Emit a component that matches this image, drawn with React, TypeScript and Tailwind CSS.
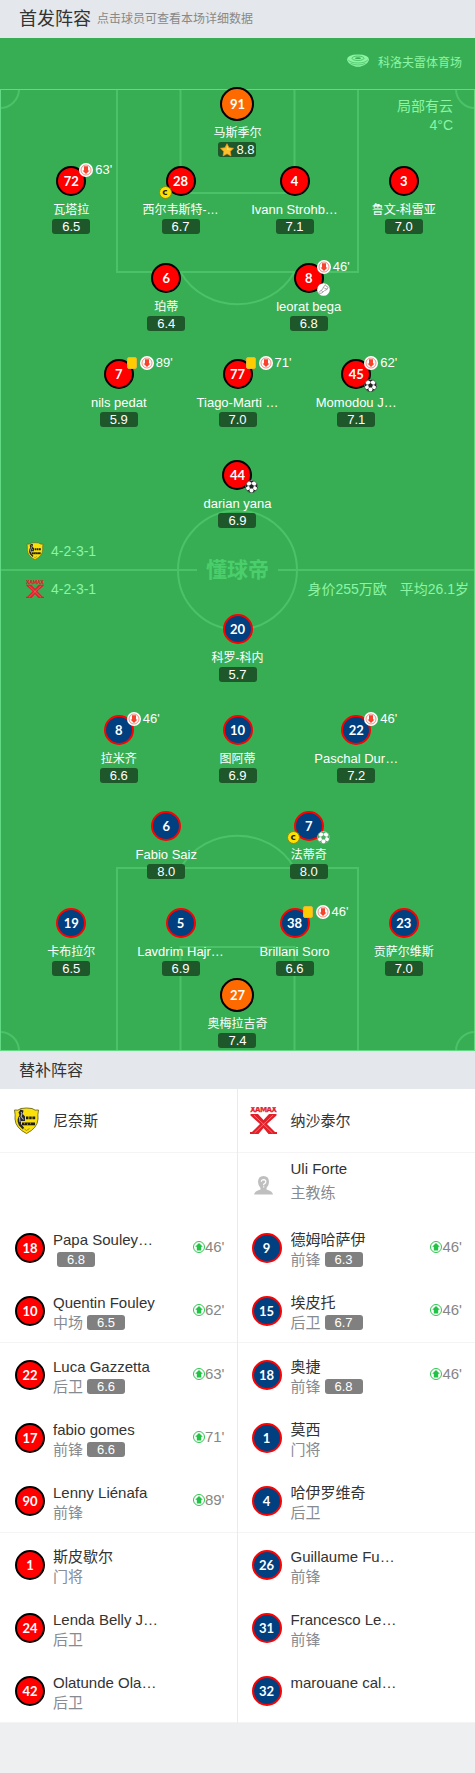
import React from "react";

type Sub = { card?: boolean; off?: string; captain?: boolean; mark?: "goal" | "boot" | "assist" };
type Starter = Sub & { no: number; name: string; rating: string; star?: boolean; keeper?: boolean };
type Reserve = { no: number; name: string; role?: string; rating?: string; on?: string };
type Side = "home" | "away";

const homeRows: Starter[][] = [
  [{ no: 91, name: "马斯季尔", rating: "8.8", star: true, keeper: true }],
  [
    { no: 72, name: "瓦塔拉", rating: "6.5", off: "63'" },
    { no: 28, name: "西尔韦斯特-…", rating: "6.7", captain: true },
    { no: 4, name: "Ivann Strohb…", rating: "7.1" },
    { no: 3, name: "鲁文-科雷亚", rating: "7.0" },
  ],
  [
    { no: 6, name: "珀蒂", rating: "6.4" },
    { no: 8, name: "leorat bega", rating: "6.8", off: "46'", mark: "boot" },
  ],
  [
    { no: 7, name: "nils pedat", rating: "5.9", card: true, off: "89'" },
    { no: 77, name: "Tiago-Marti …", rating: "7.0", card: true, off: "71'" },
    { no: 45, name: "Momodou J…", rating: "7.1", off: "62'", mark: "goal" },
  ],
  [{ no: 44, name: "darian yana", rating: "6.9", mark: "goal" }],
];

const awayRows: Starter[][] = [
  [{ no: 20, name: "科罗-科内", rating: "5.7" }],
  [
    { no: 8, name: "拉米齐", rating: "6.6", off: "46'" },
    { no: 10, name: "图阿蒂", rating: "6.9" },
    { no: 22, name: "Paschal Dur…", rating: "7.2", off: "46'" },
  ],
  [
    { no: 6, name: "Fabio Saiz", rating: "8.0" },
    { no: 7, name: "法蒂奇", rating: "8.0", captain: true, mark: "assist" },
  ],
  [
    { no: 19, name: "卡布拉尔", rating: "6.5" },
    { no: 5, name: "Lavdrim Hajr…", rating: "6.9" },
    { no: 38, name: "Brillani Soro", rating: "6.6", card: true, off: "46'" },
    { no: 23, name: "贡萨尔维斯", rating: "7.0" },
  ],
  [{ no: 27, name: "奥梅拉吉奇", rating: "7.4", keeper: true }],
];

const homeBench: Reserve[] = [
  { no: 18, name: "Papa Souley…", rating: "6.8", on: "46'" },
  { no: 10, name: "Quentin Fouley", role: "中场", rating: "6.5", on: "62'" },
  { no: 22, name: "Luca Gazzetta", role: "后卫", rating: "6.6", on: "63'" },
  { no: 17, name: "fabio gomes", role: "前锋", rating: "6.6", on: "71'" },
  { no: 90, name: "Lenny Liénafa", role: "前锋", on: "89'" },
  { no: 1, name: "斯皮歇尔", role: "门将" },
  { no: 24, name: "Lenda Belly J…", role: "后卫" },
  { no: 42, name: "Olatunde Ola…", role: "后卫" },
];

const awayBench: Reserve[] = [
  { no: 9, name: "德姆哈萨伊", role: "前锋", rating: "6.3", on: "46'" },
  { no: 15, name: "埃皮托", role: "后卫", rating: "6.7", on: "46'" },
  { no: 18, name: "奥捷", role: "前锋", rating: "6.8", on: "46'" },
  { no: 1, name: "莫西", role: "门将" },
  { no: 4, name: "哈伊罗维奇", role: "后卫" },
  { no: 26, name: "Guillaume Fu…", role: "前锋" },
  { no: 31, name: "Francesco Le…", role: "前锋" },
  { no: 32, name: "marouane cal…" },
];

function HomeCrest({ className }: { className: string }) {
  return (
    <svg viewBox="0 0 27 27" className={className} aria-hidden="true">
      <path d="M1.500 3 Q5 4 8 1.500 Q13.500 .5 19 1.500 Q22 4 25.500 3 Q24.500 8 25 12 Q24.500 21 13.500 26.500 Q2.500 21 2 12 Q2.500 8 1.500 3Z" fill="#fbe10a" stroke="#6b6420" strokeWidth=".9" />
      <path d="M7.500 2.500 L10.500 3.500 L9.800 7 L12 9.500 V14 H8 V17 L11 20.500 L10 22.500 L6 18.500 Q3.800 14 5 11 L6.500 8 L5.500 5.500Z" fill="#26272a" />
      <path d="M8 5 L9 6.500 L8 9.500 L10.500 12.500 M6.500 10 L7 15" stroke="#b4b6c0" strokeWidth="1.100" fill="none" />
      <path d="M13 9.500 h2.500 v2.800 H13z M16.200 9.500 h2.500 v2.800 h-2.500z M19.400 9.500 h2.800 v2.800 h-2.800z" fill="#1c1b12" />
      <path d="M9 15.500 h13 v2.800 H9z" fill="#1c1b12" />
      <path d="M11.500 15.500 v1.800 M14.500 16.300 v2 M17.500 15.500 v1.800" stroke="#d8c413" strokeWidth=".6" />
      <path d="M11.500 22 L13.500 23.500 L16.500 21.500" stroke="#8c7f16" strokeWidth=".8" fill="none" />
    </svg>
  );
}

function AwayCrest({ className }: { className: string }) {
  return (
    <svg viewBox="0 0 27 27" className={className} fill="none" aria-hidden="true">
      <text x="13.500" y="5.300" textAnchor="middle" fontSize="7" fontWeight="900" fill="#e2202a" stroke="#e2202a" strokeWidth=".4" fontFamily="Lato, sans-serif">
        XAMAX
      </text>
      <path d="M.5 7 H8 L13.500 13 L19 7 H26.500 V8.500 L17 17 L25 25 H27 V27 H18.500 L13.500 21 L8.500 27 H0 V25 H2 L10 17 L.5 8.500Z" fill="#e2202a" />
      <path d="M4 8.200 L22.500 26 M23 8.200 L4.500 26" stroke="#f7c3c4" strokeWidth=".5" />
    </svg>
  );
}

function Arrow({ up }: { up?: boolean }) {
  return up ? (
    <svg viewBox="0 0 12 12" className="size-3 shrink-0" aria-hidden="true">
      <circle cx="6" cy="6" r="5.500" fill="#fff" stroke="#2fc552" />
      <path d="M6 1.900 L9.800 5.700 H8.200 V9.600 H3.800 V5.700 H2.200Z" fill="#22c245" />
    </svg>
  ) : (
    <svg viewBox="0 0 14 14" className="size-3.5 shrink-0" aria-hidden="true">
      <circle cx="7" cy="7" r="7" fill="#fff" />
      <circle cx="7" cy="7" r="5" fill="none" stroke="#f4705f" strokeWidth=".8" />
      <path d="M7 11 L3.500 7.400 H5 V3.200 H9 V7.400 H10.500Z" fill="#f5432c" />
    </svg>
  );
}

function Ball({ dark }: { dark: string }) {
  return (
    <svg viewBox="0 0 14 14" className="size-[13px]" aria-hidden="true">
      <circle cx="7" cy="7" r="6.600" fill="#fff" stroke={dark} strokeWidth=".6" />
      <path d="M7 4.300 L9.600 6.200 L8.600 9.200 H5.400 L4.400 6.200Z" fill={dark} />
      <path d="M4 1 H10 L7 3Z M12.300 3.500 L13.600 8.500 L11 6.600Z M12 11.300 L8.300 13.500 L9.500 10.400Z M2 11.300 L5.700 13.500 L4.500 10.400Z M1.700 3.500 L.4 8.500 L3 6.600Z" fill={dark} />
      <path d="M7 2.500 V5 M9 6.500 L11.500 6 M8.300 9 L9.800 11 M5.700 9 L4.200 11 M5 6.500 L2.500 6" stroke={dark} strokeWidth=".5" />
    </svg>
  );
}

function Boot() {
  return (
    <svg viewBox="0 0 14 14" className="size-[13px]" aria-hidden="true">
      <circle cx="7" cy="7" r="6.800" fill="#fff" />
      <path d="M9 1.800 Q9.300 3.800 12 4.500 Q11.500 7.500 8 8.300 Q5.500 11.500 2.800 11.300 Q1.300 10.500 3 9 Q6.500 7.500 7 4.500Z M7 4.500 Q8 6.500 11 6.500 M4.500 8 L6.300 9.500" fill="none" stroke="#8b8b8b" strokeWidth=".8" />
    </svg>
  );
}

function Captain() {
  return (
    <span className="flex size-[13px] items-center justify-center rounded-full border border-[#8a8a10] bg-[#ffe100] pb-px font-['DejaVu_Sans',sans-serif] text-[9px] leading-[9px] font-bold text-[#222]">
      c
    </span>
  );
}

function Star() {
  return (
    <svg viewBox="0 0 14 14" className="size-3.5" aria-hidden="true">
      <path d="M7 .7 L9 4.700 L13.500 5.300 L10.200 8.400 L11 12.900 L7 10.800 L3 12.900 L3.800 8.400 L.5 5.300 L5 4.700Z" fill="#ffc02e" stroke="#f59a1c" strokeWidth=".7" strokeLinejoin="round" />
      <path d="M7 2.500 L8.200 5.500 L11.500 6 L7 7Z" fill="#ffe07a" />
    </svg>
  );
}

function StadiumIcon() {
  return (
    <svg viewBox="0 0 22 13" className="h-[13px] w-[22px]" fill="none" aria-hidden="true">
      <path d="M0 6 Q0 .5 11 .5 Q22 .5 22 6 Q21 9 17.500 11 L13 12.700 H9 L4.500 11 Q1 9 0 6Z" fill="#8bf5a4" />
      <ellipse cx="11" cy="4.300" rx="6" ry="2.200" stroke="#37ae54" strokeWidth=".7" />
      <ellipse cx="11" cy="4.200" rx="3" ry=".9" fill="#37ae54" />
      <path d="M1.200 6 Q4 9 11 9 Q18 9 20.800 6 M3.500 9.300 Q7 11 11 11 Q15 11 18.500 9.300" stroke="#37ae54" strokeWidth=".6" />
    </svg>
  );
}

function CoachIcon() {
  return (
    <svg viewBox="0 0 19 19" className="size-[19px]" aria-hidden="true">
      <path d="M9.500 0 Q15 0 15 6 Q15 9.500 12.500 12 V13.500 Q18.500 15 19 18.500 H0 Q.5 15 6.500 13.500 V12 Q4 9.500 4 6 Q4 0 9.500 0Z" fill="#bfbfbf" />
      <path d="M7.300 5.700 Q7.500 3.700 9.700 3.700 Q12 4 11.800 6 Q11.500 7.300 9.700 8.200 V9.300 M9.700 10.200 V11.500" fill="none" stroke="#fff" strokeWidth="1.200" />
    </svg>
  );
}

const shirt: Record<Side, string> = {
  home: "border-black bg-[#ff0000]",
  away: "border-[#ff0000] bg-[#004080]",
};

function Shirt({ side, no }: { side: Side; no: number }) {
  return (
    <span className={`flex size-[30px] shrink-0 items-center justify-center rounded-full border-2 font-['Lato',sans-serif] text-[13px] leading-4 font-bold text-white ${shirt[side]}`}>
      {no}
    </span>
  );
}

function Player({ p, side }: { p: Starter; side: Side }) {
  const latin = /^[A-Za-z]/.test(p.name);
  return (
    <li className="flex min-w-0 justify-center">
      <a href={`#${side}-${p.no}`} className="flex flex-col items-center text-white">
        <span className="relative">
          {p.keeper ? (
            <span className="flex size-[34px] items-center justify-center rounded-full border-2 border-black bg-[#ff6a00] font-['Lato',sans-serif] text-[13px] leading-4 font-bold">
              {p.no}
            </span>
          ) : (
            <span className="block pb-0.5">
              <Shirt side={side} no={p.no} />
            </span>
          )}
          {p.off && (
            <span className="absolute -top-[3px] left-[23px] flex items-center gap-0.5">
              {p.card && <span className="mr-px h-3 w-2.5 shrink-0 rounded-xs border border-[#e0b83a] bg-[#ffcc00]" />}
              <Arrow />
              <span className="text-[13px] leading-[14px]">{p.off}</span>
            </span>
          )}
          {p.captain && (
            <span className="absolute top-5 -left-[7px]">
              <Captain />
            </span>
          )}
          {p.mark && (
            <span className="absolute top-5 left-[23px]">
              {p.mark === "boot" ? <Boot /> : <Ball dark={p.mark === "goal" ? "#222" : "#4fae66"} />}
            </span>
          )}
        </span>
        <span className={`h-[21px] pt-[3px] leading-[18px] whitespace-nowrap ${latin ? "text-[13px]" : "text-xs leading-[18px]"}`}>{p.name}</span>
        <span className="flex h-[15px] w-[38px] items-center justify-center gap-0.5 rounded-[3px] bg-[#1d572a] text-[13px] leading-[15px]">
          {p.star && <Star />}
          {p.rating}
        </span>
      </a>
    </li>
  );
}

const columns: Record<number, string> = {
  1: "grid-cols-[100%]",
  2: "grid-cols-[30%_30%]",
  3: "grid-cols-[25%_25%_25%]",
  4: "grid-cols-[22%_24%_24%_22%]",
};

function Line({ players, side, space }: { players: Starter[]; side: Side; space: string }) {
  return (
    <ul className={`grid justify-center ${columns[players.length]} ${space}`}>
      {players.map((p) => (
        <Player key={p.no} p={p} side={side} />
      ))}
    </ul>
  );
}

function PitchLines() {
  return (
    <svg viewBox="0 0 475 962" preserveAspectRatio="none" className="absolute inset-0 size-full" fill="none" aria-hidden="true">
      <g stroke="#4bc267" strokeWidth="2">
        <path d="M117 0 V183 H358 V0 M180.500 0 V104 H294.500 V0 M180.500 183 C205 226 270 226 294.500 183" />
        <path d="M117 962 V779 H358 V962 M180.500 962 V858 H294.500 V962 M180.500 779 C205 736 270 736 294.500 779" />
        <path d="M0 481 H197 M278 481 H475" />
        <circle cx="237.500" cy="481" r="59.500" />
        <path d="M0 19 A19 19 0 0 0 19 0 M456 0 A19 19 0 0 0 475 19 M0 943 A19 19 0 0 1 19 962 M456 962 A19 19 0 0 1 475 943" />
      </g>
      <rect x=".5" y=".5" width="474" height="961" stroke="#62d983" />
    </svg>
  );
}

function Pitch() {
  const homeSpace = ["", "mt-[9px]", "mt-[29px]", "mt-7", "mt-[33px]"];
  const awaySpace = ["", "mt-[33px]", "mt-7", "mt-[29px]", "mt-0.5"];
  return (
    <section className="relative bg-[#37ae54] pb-[3px]">
      <div className="absolute inset-x-0 top-[51px] bottom-0">
        <PitchLines />
        <div className="absolute top-2 right-[22px] text-right text-sm leading-[19px] text-[#8bf5a4]">
          <p>局部有云</p>
          <p>4°C</p>
        </div>
      </div>
      <div className="relative">
        <div className="flex h-[49px] items-center justify-end gap-[9px] pr-[13px] text-xs text-[#8bf5a4]">
          <span className="pb-1">
            <StadiumIcon />
          </span>
          <span>科洛夫雷体育场</span>
        </div>
        {homeRows.map((r, i) => (
          <Line key={i} players={r} side="home" space={homeSpace[i]} />
        ))}
        <div className="relative pt-1 pr-1.5 pb-1.5 pl-[26px] text-sm text-[#8bf5a4]">
          <div className="flex h-[38px] items-center gap-[7px]">
            <HomeCrest className="size-[18px]" />
            4-2-3-1
          </div>
          <div className="flex h-[38px] items-center gap-[7px]">
            <AwayCrest className="size-[18px]" />
            4-2-3-1
            <span className="ml-auto">身价255万欧</span>
            <span className="ml-1.5">平均26.1岁</span>
          </div>
          <div className="absolute inset-0 flex items-center justify-center pb-1 text-[21px] leading-none font-bold text-[#4bcf6c]">
            懂球帝
          </div>
        </div>
        {awayRows.map((r, i) => (
          <Line key={i} players={r} side="away" space={awaySpace[i]} />
        ))}
      </div>
    </section>
  );
}

function Team({ side, name, coach, players }: { side: Side; name: string; coach?: string; players: Reserve[] }) {
  const home = side === "home";
  return (
    <div className={`min-w-0 ${home ? "border-r border-[#ebebeb]" : ""}`}>
      <h3 className={`flex h-16 items-center border-b border-[#f4f4f4] text-[15px] text-[#333] ${home ? "gap-[13px] pl-[13px]" : "gap-3.5 pl-3"}`}>
        {home ? <HomeCrest className="size-[27px]" /> : <AwayCrest className="size-[27px]" />}
        <span className="pt-0.5">{name}</span>
      </h3>
      <div className="flex h-[63px] gap-[18px] pl-4">
        {coach && (
          <>
            <span className="pt-[23px]">
              <CoachIcon />
            </span>
            <p className="pt-1 text-[15px] leading-6 text-[#333]">
              {coach}
              <span className="block text-[#868b92]">主教练</span>
            </p>
          </>
        )}
      </div>
      <ul>
        {players.map((p, i) => (
          <li key={p.no} className={i % 3 === 1 ? "h-16 border-b border-[#f4f4f4]" : "h-[63px]"}>
            <a href={`#${side}-${p.no}`} className={`flex h-[63px] items-center text-[15px] ${home ? "gap-2 pr-3 pl-[15px]" : "gap-[9px] pr-[13px] pl-3.5"}`}>
              <Shirt side={side} no={p.no} />
              <span className="min-w-0 flex-1 pt-1 leading-5">
                <span className="block truncate text-[#333]">{p.name}</span>
                <span className="flex h-5 items-center text-[#868b92]">
                  {p.role}
                  {p.rating && (
                    <span className="ml-1 flex h-[15px] w-[38px] items-center justify-center rounded-[3px] bg-[#808080] text-[13px] text-white">
                      {p.rating}
                    </span>
                  )}
                </span>
              </span>
              {p.on && (
                <span className="flex items-center text-[#868686]">
                  <span className="pb-0.5">
                    <Arrow up />
                  </span>
                  {p.on}
                </span>
              )}
            </a>
          </li>
        ))}
      </ul>
    </div>
  );
}

export default function App() {
  return (
    <main className="min-h-screen bg-[#eeeff1] font-['Liberation_Sans','Noto_Sans_CJK_SC',sans-serif] pb-[50px]">
      <header className="flex h-[38px] items-center gap-1.5 bg-[#e4e7ec] px-[19px]">
        <h1 className="text-lg text-[#333]">首发阵容</h1>
        <p className="text-xs text-[#888]">点击球员可查看本场详细数据</p>
      </header>
      <Pitch />
      <h2 className="flex h-[38px] items-center bg-[#e4e7ec] px-[19px] pt-0.5 text-base text-[#333]">替补阵容</h2>
      <section className="grid grid-cols-2 bg-white">
        <Team side="home" name="尼奈斯" players={homeBench} />
        <Team side="away" name="纳沙泰尔" coach="Uli Forte" players={awayBench} />
      </section>
    </main>
  );
}
